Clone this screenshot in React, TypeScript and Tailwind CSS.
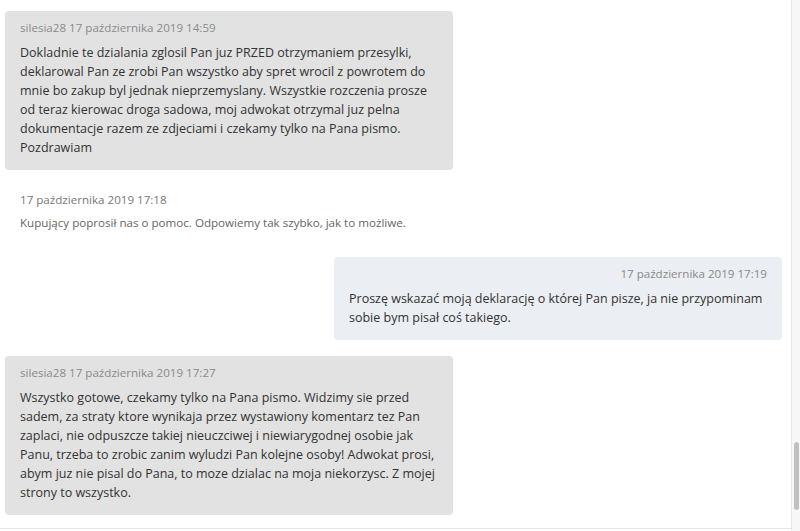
const messages = [
  {
    side: "left",
    meta: "silesia28 17 października 2019 14:59",
    lines: [
      "Dokladnie te dzialania zglosil Pan juz PRZED otrzymaniem przesylki,",
      "deklarowal Pan ze zrobi Pan wszystko aby spret wrocil z powrotem do",
      "mnie bo zakup byl jednak nieprzemyslany. Wszystkie rozczenia prosze",
      "od teraz kierowac droga sadowa, moj adwokat otrzymal juz pelna",
      "dokumentacje razem ze zdjeciami i czekamy tylko na Pana pismo.",
      "Pozdrawiam",
    ],
  },
];

function Bubble({ meta, lines, right }: { meta: string; lines: string[]; right?: boolean }) {
  return (
    <div
      className={`w-[448px] rounded-[4px] px-[15px] pt-[8px] pb-[13px] ${
        right ? "self-end bg-[#ebeef2]" : "self-start bg-[#e2e2e2]"
      }`}
    >
      <p className={`text-[11.6px] leading-[18px] text-[#8a8a8a] ${right ? "text-right" : ""}`}>{meta}</p>
      <div className="mt-[6px] text-[12.5px] leading-[19px] text-[#333]">
        {lines.map((l) => (
          <p key={l} className="whitespace-nowrap">
            {l}
          </p>
        ))}
      </div>
    </div>
  );
}

export default function App() {
  return (
    <div className="flex h-[531px] w-[800px] overflow-hidden bg-white font-['Open_Sans',sans-serif]">
      <div className="flex flex-1 flex-col">
        <div className="flex flex-col pl-[5px] pr-[9px] pt-[11px]">
          <Bubble meta={messages[0].meta} lines={messages[0].lines} />

          <div className="mt-[21px] px-[15px]">
            <p className="text-[11.6px] leading-[18px] text-[#777]">17 października 2019 17:18</p>
            <p className="mt-[5px] text-[11.6px] leading-[18px] text-[#666]">
              Kupujący poprosił nas o pomoc. Odpowiemy tak szybko, jak to możliwe.
            </p>
          </div>

          <div className="mt-[25px] flex flex-col">
            <Bubble
              right
              meta="17 października 2019 17:19"
              lines={[
                "Proszę wskazać moją deklarację o której Pan pisze, ja nie przypominam",
                "sobie bym pisał coś takiego.",
              ]}
            />
          </div>

          <div className="mt-[16px] flex flex-col">
            <Bubble
              meta="silesia28 17 października 2019 17:27"
              lines={[
                "Wszystko gotowe, czekamy tylko na Pana pismo. Widzimy sie przed",
                "sadem, za straty ktore wynikaja przez wystawiony komentarz tez Pan",
                "zaplaci, nie odpuszcze takiej nieuczciwej i niewiarygodnej osobie jak",
                "Panu, trzeba to zrobic zanim wyludzi Pan kolejne osoby! Adwokat prosi,",
                "abym juz nie pisal do Pana, to moze dzialac na moja niekorzysc. Z mojej",
                "strony to wszystko.",
              ]}
            />
          </div>
        </div>
        <div className="mt-[13px] mr-[-4px] border-b border-[#e6e6e6]" />
      </div>
      <div className="flex w-[9px] flex-col border-l border-[#e8e8e8] bg-[#f7f7f7]">
        <div className="mx-auto mt-[442px] h-[68px] w-[5px] rounded-full bg-[#c1c1c1]" />
      </div>
    </div>
  );
}
